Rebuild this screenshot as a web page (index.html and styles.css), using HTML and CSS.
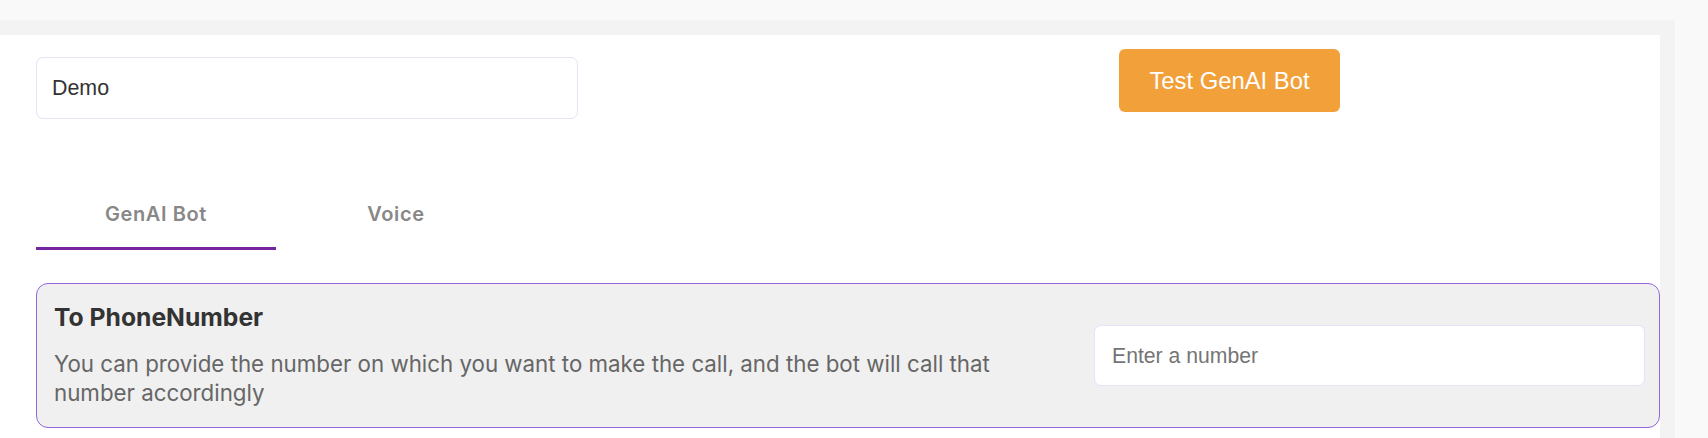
FILE: index.html
```html
<!DOCTYPE html>
<html lang="en">
<head>
<meta charset="utf-8">
<title>GenAI Bot</title>
<link rel="stylesheet" href="styles.css">
</head>
<body>
<div class="frame">
  <main class="panel">
    <div class="top-row">
      <input class="name-input" type="text" value="Demo">
      <button class="test-btn" type="button">Test GenAI Bot</button>
    </div>
    <nav class="tabs">
      <div class="tab active">GenAI Bot</div>
      <div class="tab">Voice</div>
    </nav>
    <section class="card">
      <div class="card-text">
        <h3 class="card-title">To PhoneNumber</h3>
        <p class="card-desc">You can provide the number on which you want to make the call, and the bot will call that number accordingly</p>
      </div>
      <input class="number-input" type="text" placeholder="Enter a number">
    </section>
  </main>
</div>
</body>
</html>
```
FILE: styles.css
```css
html, body { margin: 0; padding: 0; }
body {
  background: #f9f9f9;
  padding-top: 20px;
  font-family: "Inter", "Liberation Sans", sans-serif;
  height: 438px;
  box-sizing: border-box;
  overflow: hidden;
}
.frame {
  width: 1675px;
  background: #f3f3f3;
  padding: 15px 15px 0 0;
  box-sizing: border-box;
  height: 418px;
}
.panel {
  background: #fff;
  height: 100%;
  padding-left: 36px;
  box-sizing: border-box;
}
.top-row {
  display: flex;
  align-items: flex-start;
  padding-top: 14px;
}
.name-input {
  margin-top: 8px;
  width: 542px;
  height: 62px;
  box-sizing: border-box;
  border: 1px solid #e1e5f6;
  border-radius: 7px;
  padding: 0 15px;
  font-family: "Liberation Sans", Arial, sans-serif;
  font-size: 21.4px;
  color: #333;
  background: #fff;
  outline: none;
}
.test-btn {
  margin-left: 541px;
  width: 221px;
  height: 63px;
  border: none;
  border-radius: 6px;
  background: #f2a03a;
  color: #fff;
  font-family: "Liberation Sans", Arial, sans-serif;
  font-size: 23.8px;
  padding: 0;
}
.tabs {
  display: flex;
  margin-top: 64px;
}
.tab {
  width: 240px;
  text-align: center;
  padding: 18px 0 19px;
  line-height: 27px;
  font-size: 20px;
  letter-spacing: 0.6px;
  font-weight: 600;
  color: #888;
  border-bottom: 3px solid transparent;
}
.tab.active { border-bottom-color: #74259f; }
.card {
  margin-top: 33px;
  height: 145px;
  box-sizing: border-box;
  border: 1px solid #9466dc;
  border-radius: 12px;
  background: #f0f0f0;
  display: flex;
  align-items: center;
  justify-content: space-between;
  padding: 0 14px 0 17px;
}
.card-text { width: 980px; padding-bottom: 3px; }
.card-title {
  margin: 0 0 16px;
  font-size: 24.7px;
  font-weight: 700;
  color: #333;
  line-height: 32px;
}
.card-desc {
  margin: 0;
  font-size: 22.3px;
  line-height: 29px;
  color: #666;
}
.number-input {
  width: 551px;
  height: 61px;
  box-sizing: border-box;
  border: 1px solid #e1e5f6;
  border-radius: 7px;
  padding: 0 17px;
  font-family: "Liberation Sans", Arial, sans-serif;
  font-size: 21.2px;
  background: #fff;
  outline: none;
}
.number-input::placeholder { color: #757575; }
```
